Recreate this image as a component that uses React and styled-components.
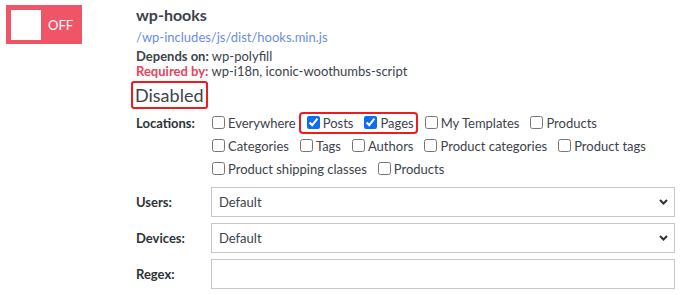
import React from "react";
import styled, { createGlobalStyle } from "styled-components";

const GlobalStyle = createGlobalStyle`
	body {
		margin: 0;
		background: #fff;
		font-family: Lato, "Open Sans", sans-serif;
		color: #3c434a;
	}
`;

const locations = [
	{ label: "Everywhere" },
	{ label: "Posts", checked: true, group: "hl" },
	{ label: "Pages", checked: true, group: "hl" },
	{ label: "My Templates" },
	{ label: "Products" },
	{ label: "Categories" },
	{ label: "Tags" },
	{ label: "Authors" },
	{ label: "Product categories" },
	{ label: "Product tags" },
	{ label: "Product shipping classes" },
	{ label: "Products" },
];

const Chevron = () => (
	<svg width="9" height="6" viewBox="0 0 9 6">
		<path d="M1 1 L4.5 4.5 L8 1" fill="none" stroke="#2c3338" strokeWidth="2" />
	</svg>
);

const CheckItem = ({ label, checked }) => (
	<Item>
		<Box type="checkbox" defaultChecked={checked} />
		{label}
	</Item>
);

const App = () => {
	const plain = locations.filter((l) => !l.group);
	const hl = locations.filter((l) => l.group);

	return (
		<>
			<GlobalStyle />
			<Container>
				<Toggle>
					<Knob />
					OFF
				</Toggle>
				<Details>
					<Title>wp-hooks</Title>
					<Path href="#">/wp-includes/js/dist/hooks.min.js</Path>
					<Meta>
						<div>
							<b>Depends on:</b> wp-polyfill
						</div>
						<div>
							<Required>Required by:</Required> wp-i18n, iconic-woothumbs-script
						</div>
					</Meta>
					<Status>Disabled</Status>
					<Form>
						<Label>Locations:</Label>
						<Checks>
							<CheckItem {...plain[0]} />
							<Highlight>
								{hl.map((l) => (
									<CheckItem key={l.label} {...l} />
								))}
							</Highlight>
							{plain.slice(1).map((l, i) => (
								<CheckItem key={i} {...l} />
							))}
						</Checks>

						<Label $field>Users:</Label>
						<SelectWrap>
							<Select defaultValue="default">
								<option value="default">Default</option>
							</Select>
							<Arrow>
								<Chevron />
							</Arrow>
						</SelectWrap>

						<Label $field>Devices:</Label>
						<SelectWrap>
							<Select defaultValue="default">
								<option value="default">Default</option>
							</Select>
							<Arrow>
								<Chevron />
							</Arrow>
						</SelectWrap>

						<Label $field>Regex:</Label>
						<Input type="text" />
					</Form>
				</Details>
			</Container>
		</>
	);
};

export default App;

const Container = styled.div`
	display: flex;
	align-items: flex-start;
	padding-left: 6px;
`;

const Toggle = styled.div`
	display: flex;
	align-items: center;
	gap: 7px;
	width: 76px;
	height: 39px;
	box-sizing: border-box;
	margin-top: 5px;
	padding: 5px;
	background: #ef5566;
	color: #fff;
	font-size: 13px;
`;

const Knob = styled.span`
	width: 30px;
	height: 30px;
	background: #fff;
`;

const Details = styled.div`
	display: flex;
	flex-direction: column;
	align-items: flex-start;
	margin-left: 54px;
	width: 539px;
`;

const Title = styled.div`
	margin-top: 5px;
	font-size: 16px;
	font-weight: 700;
	line-height: 20px;
	color: #3c434a;
`;

const Path = styled.a`
	margin-top: 3px;
	font-size: 13px;
	line-height: 18px;
	color: #6b8ce4;
	text-decoration: none;
`;

const Meta = styled.div`
	margin-top: 2.5px;
	font-size: 13px;
	line-height: 15.6px;
	color: #3c434a;

	b {
		font-weight: 700;
	}
`;

const Required = styled.b`
	color: #e8435b;
`;

const Status = styled.div`
	margin: 1px 0 0 -5px;
	padding: 0 3px 0 2px;
	border: 2px solid #ee1c1c;
	border-radius: 3px;
	font-size: 18px;
	line-height: 24px;
	color: #3c434a;
`;

const Form = styled.div`
	display: grid;
	grid-template-columns: 75px 464px;
	align-items: center;
	row-gap: 6px;
	margin-top: 5px;
	width: 539px;
`;

const Label = styled.div`
	align-self: ${(p) => (p.$field ? "center" : "start")};
	font-size: 13px;
	font-weight: 700;
	line-height: 18px;
	color: #2c3338;
	margin-bottom: ${(p) => (p.$field ? "0" : "3px")};
`;

const Checks = styled.div`
	display: flex;
	flex-wrap: wrap;
	column-gap: 11px;
	row-gap: 5px;
	padding-left: 1px;
	margin-bottom: 3px;
`;

const Highlight = styled.span`
	display: inline-flex;
	gap: 11px;
	padding: 0 2px 0 6px;
	margin: 0 -2px 0 -6px;
	outline: 2px solid #ee1c1c;
	border-radius: 2px;
`;

const Item = styled.label`
	display: inline-flex;
	align-items: center;
	gap: 3px;
	height: 18px;
	font-size: 13px;
	color: #3c434a;
	white-space: nowrap;
`;

const Box = styled.input`
	width: 13px;
	height: 13px;
	margin: 0;
	accent-color: #0b6cf6;
`;

const SelectWrap = styled.div`
	position: relative;
	height: 30px;
`;

const Select = styled.select`
	appearance: none;
	width: 100%;
	height: 30px;
	box-sizing: border-box;
	padding: 0 24px 0 7px;
	border: 1px solid #c8c8c8;
	border-radius: 0;
	background: #fff;
	font-family: inherit;
	font-size: 13px;
	color: #3c434a;
	outline: none;
`;

const Arrow = styled.span`
	position: absolute;
	right: 7px;
	top: 12px;
	display: flex;
	pointer-events: none;
`;

const Input = styled.input`
	width: 100%;
	height: 30px;
	box-sizing: border-box;
	border: 1px solid #c8c8c8;
	border-radius: 0;
	padding: 0 7px;
	font-family: inherit;
	font-size: 13px;
	outline: none;
`;
